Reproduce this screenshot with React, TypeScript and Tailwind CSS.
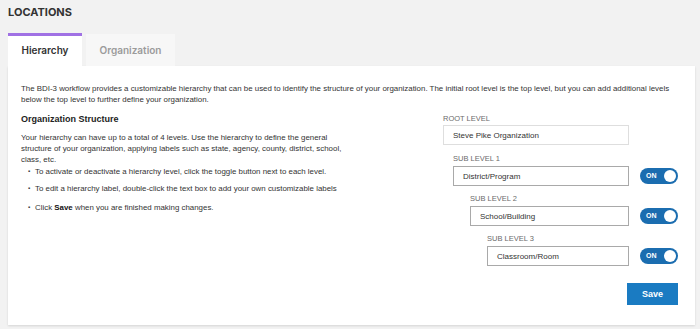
import React, { useState } from "react";

interface LevelRowProps {
  label: string;
  value: string;
  indent: string;
  showToggle?: boolean;
  isRoot?: boolean;
}

const Toggle: React.FC<{ on: boolean; onChange: () => void }> = ({ on, onChange }) => (
  <button
    onClick={onChange}
    className={`relative ml-[11px] h-[16px] w-[38px] shrink-0 rounded-full ${on ? "bg-[#1b6db0]" : "bg-[#bdbdbd]"}`}
  >
    <span className={`absolute top-[1px] text-[7px] font-bold leading-[14px] text-white ${on ? "left-[6px]" : "right-[5px]"}`}>
      {on ? "ON" : "OFF"}
    </span>
    <span className={`absolute top-[2px] h-[12px] w-[12px] rounded-full bg-white ${on ? "right-[2px]" : "left-[2px]"}`} />
  </button>
);

const LevelRow: React.FC<LevelRowProps> = ({ label, value, indent, showToggle = true, isRoot = false }) => {
  const [on, setOn] = useState(true);
  return (
    <div className={indent}>
      <div className="text-[7.5px] uppercase leading-[12px] text-[#6b6b6b]">{label}</div>
      <div className={`flex items-center ${isRoot ? "" : "mt-[1px]"}`}>
        <div
          className={`flex h-[20px] flex-1 items-center border bg-white pl-[9px] text-[8px] text-[#333] ${isRoot ? "border-[#dedede]" : "border-[#a9a9a9]"}`}
        >
          {value}
        </div>
        {showToggle ? <Toggle on={on} onChange={() => setOn(!on)} /> : <div className="ml-[11px] w-[38px] shrink-0" />}
      </div>
    </div>
  );
};

const App: React.FC = () => {
  const [tab, setTab] = useState("hierarchy");

  return (
    <div className="min-h-[329px] w-[700px] bg-[#f2f2f2] pl-[8px] pr-[5px] pt-[4px] font-['Liberation_Sans',Arial,sans-serif]">
      <h1 className="font-['Inter',sans-serif] text-[11px] font-bold leading-[17px] text-[#333]">LOCATIONS</h1>

      {/* tabs */}
      <div className="mt-[12px] flex items-end gap-[4px] font-['Inter',sans-serif] text-[10px] font-semibold">
        <button
          onClick={() => setTab("hierarchy")}
          className={`h-[33px] w-[74px] border-t-[3px] pb-[1px] ${tab === "hierarchy" ? "border-[#a071e4] bg-white text-[#333]" : "border-transparent bg-[#f7f7f7] text-[#9b9b9b]"}`}
        >
          Hierarchy
        </button>
        <button
          onClick={() => setTab("organization")}
          className={`h-[32px] w-[89px] ${tab === "organization" ? "border-t-[3px] border-[#a071e4] bg-white text-[#333]" : "bg-[#f7f7f7] text-[#9b9b9b]"}`}
        >
          Organization
        </button>
      </div>

      {/* panel */}
      <div className="h-[259px] bg-white px-[13px] pt-[17px] text-[7.9px] leading-[11px] text-[#333] shadow-[0_1px_2px_rgba(0,0,0,0.12)]">
        <p>
          The BDI-3 workflow provides a customizable hierarchy that can be used to identify the structure of your organization. The initial root level is the top level, but you can add additional levels below the top level to further define your organization.
        </p>

        <div className="mt-[7px] flex">
          <div className="w-[330px]">
            <h2 className="text-[9px] font-bold leading-[14px] text-[#222]">Organization Structure</h2>
            <p className="mt-[6px]">
              Your hierarchy can have up to a total of 4 levels. Use the hierarchy to define the general structure of your organization, applying labels such as state, agency, county, district, school, class, etc.
            </p>
            <ul className="mt-[1px] pl-[7px]">
              <li className="flex">
                <span className="w-[7px] text-[6px]">&#9642;</span>
                <span>To activate or deactivate a hierarchy level, click the toggle button next to each level.</span>
              </li>
              <li className="mt-[6px] flex">
                <span className="w-[7px] text-[6px]">&#9642;</span>
                <span>To edit a hierarchy label, double-click the text box to add your own customizable labels</span>
              </li>
              <li className="mt-[8px] flex">
                <span className="w-[7px] text-[6px]">&#9642;</span>
                <span>
                  Click <b className="text-[#111]">Save</b> when you are finished making changes.
                </span>
              </li>
            </ul>
          </div>

          <div className="ml-auto mr-[4px] mt-[1px] w-[236px]">
            <LevelRow label="Root Level" value="Steve Pike Organization" indent="ml-[1px]" showToggle={false} isRoot />
            <div className="mt-[8px]">
              <LevelRow label="Sub Level 1" value="District/Program" indent="ml-[11px]" />
            </div>
            <div className="mt-[7px]">
              <LevelRow label="Sub Level 2" value="School/Building" indent="ml-[28px]" />
            </div>
            <div className="mt-[7px]">
              <LevelRow label="Sub Level 3" value="Classroom/Room" indent="ml-[45px]" />
            </div>
            <div className="mt-[17px] flex justify-end">
              <button className="h-[22px] w-[51px] bg-[#1a7bc2] text-[9px] font-bold text-white">Save</button>
            </div>
          </div>
        </div>
      </div>
    </div>
  );
};

export default App;
